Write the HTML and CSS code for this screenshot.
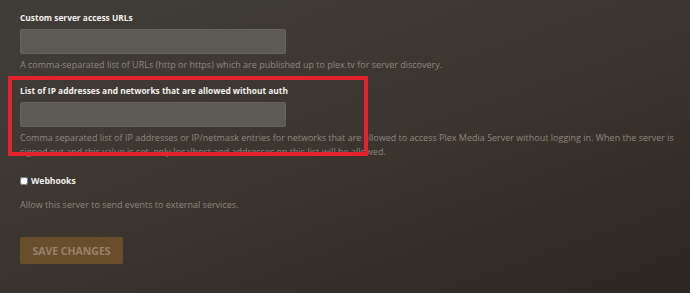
FILE: index.html
```html
<!DOCTYPE html>
<html lang="en">
<head>
    <meta charset="UTF-8">
    <title>Network Settings</title>
    <link rel="stylesheet" href="styles.css">
</head>
<body>
    <div class="settings">
        <div class="field">
            <label class="field-label">Custom server access URLs</label>
            <input type="text" class="field-input">
            <p class="field-help">A comma-separated list of URLs (http or https) which are published up to plex.tv for server discovery.</p>
        </div>

        <div class="field field-marked">
            <label class="field-label">List of IP addresses and networks that are allowed without auth</label>
            <input type="text" class="field-input">
            <p class="field-help">Comma separated list of IP addresses or IP/netmask entries for networks that are allowed to access Plex Media Server without logging in. When the server is signed out and this value is set, only localhost and addresses on this list will be allowed.</p>
            <div class="highlight-box"></div>
        </div>

        <div class="field">
            <label class="check-label"><input type="checkbox" class="check"> Webhooks</label>
            <p class="field-help check-help">Allow this server to send events to external services.</p>
        </div>

        <button class="btn-save" disabled>SAVE CHANGES</button>
    </div>
</body>
</html>
```

FILE: styles.css
```css
body {
    margin: 0;
    height: 293px;
    overflow: hidden;
    font-family: "Open Sans", "Liberation Sans", sans-serif;
    background: linear-gradient(160deg, #403d39 0%, #3b342e 55%, #2d2521 100%);
    color: #8c8780;
}

.settings {
    padding: 11px 16px 0 20px;
}

.field {
    position: relative;
}

.field-label {
    display: block;
    font-size: 8.4px;
    font-weight: bold;
    line-height: 14px;
    color: #f2f0ec;
    margin-bottom: 4px;
}

.field-input {
    display: block;
    box-sizing: border-box;
    width: 266px;
    height: 25px;
    margin: 0;
    background: #5d5a55;
    border: 1px solid #66625c;
    border-radius: 2px;
}

.field-help {
    margin: 4px 0 0 0;
    font-size: 9px;
    line-height: 14px;
    color: #8c8780;
}

.field-marked {
    margin-top: 12px;
}

.highlight-box {
    position: absolute;
    left: -12px;
    top: -8px;
    width: 352px;
    height: 72px;
    border: 4px solid #e3222b;
}

.check-label {
    display: flex;
    align-items: center;
    gap: 3px;
    margin-top: 15px;
    font-size: 8.6px;
    font-weight: bold;
    line-height: 14px;
    color: #f2f0ec;
}

.check {
    width: 8px;
    height: 8px;
    margin: 0;
}

.check-help {
    margin-top: 10px;
}

.btn-save {
    display: block;
    margin-top: 25px;
    width: 103px;
    height: 27px;
    padding: 0;
    border: none;
    border-radius: 2px;
    background: #6a4e2c;
    color: #94846b;
    font-family: "Open Sans", "Liberation Sans", sans-serif;
    font-size: 10.5px;
    font-weight: bold;
}
```
